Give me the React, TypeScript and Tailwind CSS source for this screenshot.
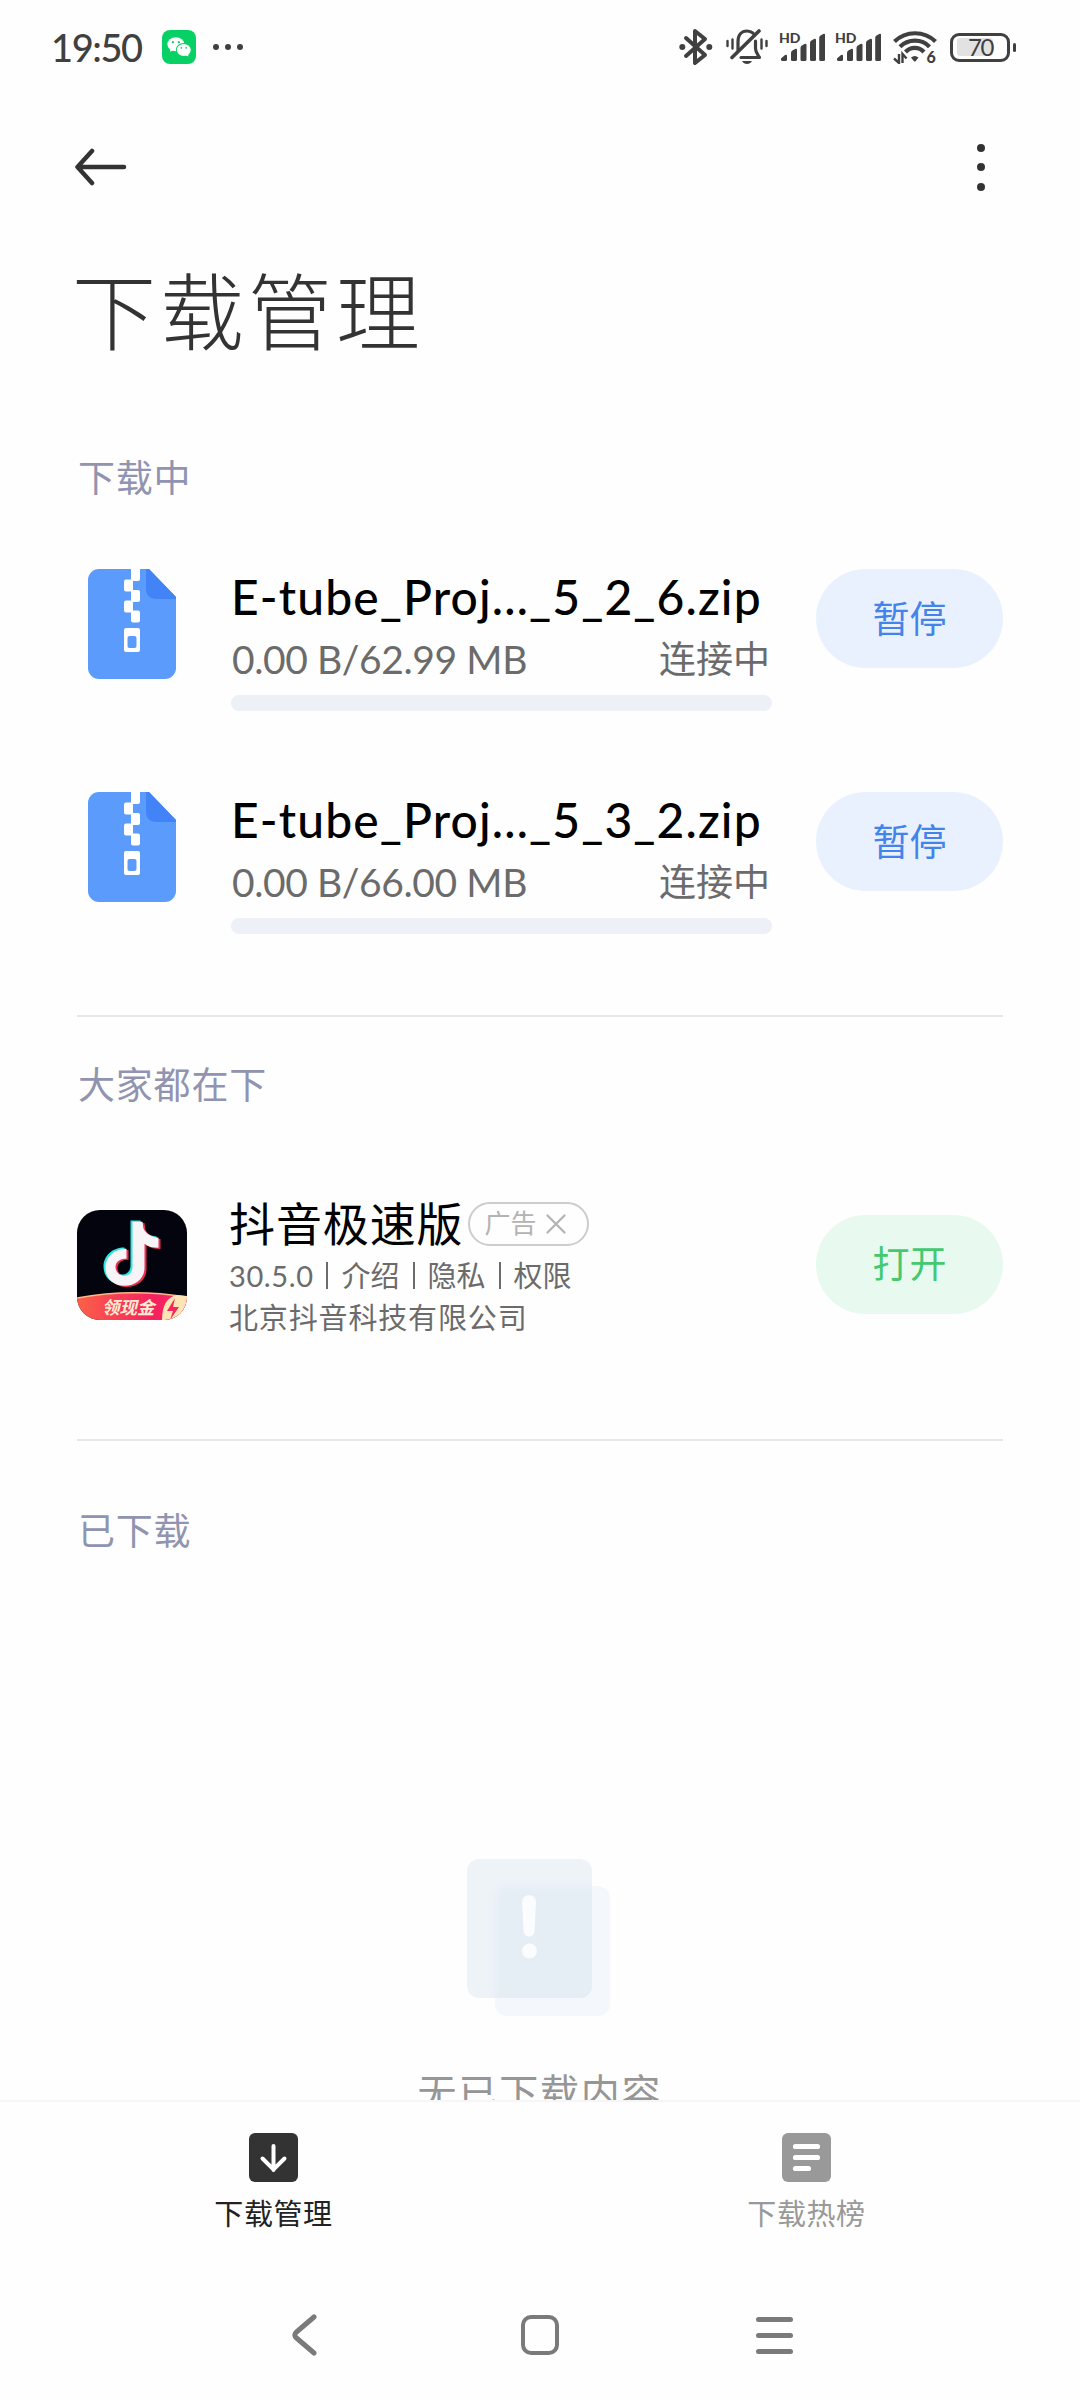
import type { ReactNode } from "react";

const downloads = [
  { name: "E-tube_Proj…_5_2_6.zip", size: "0.00 B/62.99 MB", status: "连接中" },
  { name: "E-tube_Proj…_5_3_2.zip", size: "0.00 B/66.00 MB", status: "连接中" },
];

function WeChatIcon() {
  return (
    <svg className="w-[34px] h-[34px]" viewBox="0 0 34 34">
      <rect width="34" height="34" rx="8" fill="#07d164" />
      <path d="M8.5 18l-.4 3.8 4-2z" fill="#fff" />
      <ellipse cx="13.8" cy="14.3" rx="8.4" ry="7" fill="#fff" />
      <ellipse cx="21.6" cy="19.8" rx="7.8" ry="6.8" fill="#07d164" />
      <ellipse cx="21.8" cy="19.9" rx="7" ry="6" fill="#fff" />
      <path d="M23 25l3.4 1.4-.2-3z" fill="#fff" />
      <g fill="#07d164">
        <circle cx="10.9" cy="12.2" r="1.1" />
        <circle cx="16.8" cy="12.2" r="1.1" />
        <circle cx="19.4" cy="17.8" r="0.9" />
        <circle cx="24.1" cy="17.8" r="0.9" />
      </g>
    </svg>
  );
}

function BluetoothIcon() {
  return (
    <svg className="w-[34px] h-[38px]" viewBox="0 0 34 38">
      <path
        d="M7 10l19 17-10 8V3l10 8L7 28"
        fill="none"
        stroke="#404040"
        strokeWidth="4"
        strokeLinecap="round"
        strokeLinejoin="round"
      />
      <circle cx="3.3" cy="19" r="3" fill="#404040" />
      <circle cx="30.3" cy="19" r="3" fill="#404040" />
    </svg>
  );
}

function MutedBellIcon() {
  return (
    <svg className="w-[42px] h-[36px]" viewBox="0 0 42 36" fill="none" stroke="#404040" strokeLinecap="round">
      <path d="M12 21v-8C12 6 15.500 2 21 2c2.500 0 4.500 .8 6 2.200" strokeWidth="3.200" />
      <path d="M29.500 12v7.500c0 4 2.500 6.500 4 9H15" strokeWidth="3.200" strokeLinejoin="round" />
      <path d="M6 28.500L33 2" strokeWidth="3.600" />
      <path d="M16 32h10c-1 2-3 3-5 3s-4-1-5-3z" fill="#404040" stroke="none" />
      <path d="M1.500 12v5M6.500 10.500v9M35.500 10.500v9M40.500 12v5" strokeWidth="2.400" />
    </svg>
  );
}

function SignalIcon() {
  return (
    <svg className="w-[46px] h-[36px] overflow-visible" viewBox="0 -2 46 36" fill="#404040">
      <text x="0" y="11.500" fontSize="14" fontWeight="900" fontFamily="Lato, sans-serif">
        HD
      </text>
      <path d="M2 27.500l4-3.500q2-.8 2 1v3.500q0 1.500-1.500 1.500H3.500Q2 30 2 28.500z" />
      <path d="M12 22q0-1.500 1-2.200l3-1.800q2-.8 2 1v9.500q0 1.500-1.500 1.500h-3Q12 30 12 28.500z" />
      <path d="M21.500 17q0-1.500 1-2.200l3-1.800q2-.8 2 1v14.500q0 1.500-1.500 1.500h-3q-1.500 0-1.500-1.500z" />
      <path d="M31 12q0-1.500 1-2.200l3-1.800q2-.8 2 1v19.500q0 1.500-1.500 1.500h-3Q31 30 31 28.500z" />
      <path d="M40.200 7q0-1.500 1-2.200l3-1.800q1.800-.8 1.800 1v24.500q0 1.500-1.500 1.500h-2.800q-1.500 0-1.500-1.500z" />
    </svg>
  );
}

function WifiIcon() {
  return (
    <svg className="w-[44px] h-[34px]" viewBox="0 0 44 34">
      <g fill="none" stroke="#404040" strokeWidth="4.200">
        <path d="M1.500 11.500C13 0.500 31 0.500 42.500 11.500" />
        <path d="M7 16.800C15 8.600 29 8.600 36.500 16.800" />
        <path d="M12.500 22c5-5.400 13.500-5.400 18.500 0" />
      </g>
      <path d="M18 27.500q3.700-3.200 7.500 0l-2.700 3.500q-1 1.200-2 0z" fill="#404040" />
      <g fill="none" stroke="#404040" strokeWidth="2.400">
        <path d="M6 24v9L1 28.500M9.500 33v-9l4 4.500" />
      </g>
      <text x="33.500" y="32.500" fontSize="16" fontWeight="900" fill="#404040" fontFamily="Lato, sans-serif">
        6
      </text>
    </svg>
  );
}

function Battery() {
  return (
    <div className="flex items-center gap-[3px]">
      <div className="flex h-[29px] w-[60px] items-center rounded-[9px] border-[3px] border-[#404040] p-[4px]">
        <div className="flex h-[18px] w-[36px] items-center rounded-[3px] bg-[#e2e2e2] pl-[11px] text-[24px] leading-none tracking-[-1.5px] text-[#404040]">
          70
        </div>
      </div>
      <div className="h-[9px] w-[3px] rounded-full bg-[#404040]" />
    </div>
  );
}

function StatusBar() {
  return (
    <div className="flex h-[94px] items-center pl-[51px] pr-[64px]">
      <span className="w-[111px] text-[38px] font-medium leading-none tracking-[-1.4px] text-[#404040]">19:50</span>
      <WeChatIcon />
      <div className="ml-[17px] flex gap-[6px]">
        <i className="h-[6px] w-[6px] rounded-full bg-[#404040]" />
        <i className="h-[6px] w-[6px] rounded-full bg-[#404040]" />
        <i className="h-[6px] w-[6px] rounded-full bg-[#404040]" />
      </div>
      <div className="ml-auto flex items-center">
        <BluetoothIcon />
        <div className="ml-[13px]">
          <MutedBellIcon />
        </div>
        <div className="ml-[11px] flex gap-[10px]">
          <SignalIcon />
          <SignalIcon />
        </div>
        <div className="ml-[12px] mr-[13px]">
          <WifiIcon />
        </div>
        <Battery />
      </div>
    </div>
  );
}

function Header() {
  return (
    <header className="flex h-[146px] items-center justify-between pl-[75px] pr-[95px]">
      <svg className="w-[52px] h-[38px]" viewBox="0 0 52 38" fill="none" stroke="#333" strokeWidth="4.500" strokeLinecap="round" strokeLinejoin="round">
        <path d="M17 3L2.500 19 17 35M3 19h46" />
      </svg>
      <div className="flex flex-col gap-[11.5px]">
        <i className="h-[8px] w-[8px] rounded-full bg-[#333]" />
        <i className="h-[8px] w-[8px] rounded-full bg-[#333]" />
        <i className="h-[8px] w-[8px] rounded-full bg-[#333]" />
      </div>
    </header>
  );
}

function ZipIcon() {
  return (
    <svg className="w-[88px] h-[110px] shrink-0" viewBox="0 0 88 110">
      <path d="M11 0h50l27 28v71a11 11 0 0 1-11 11H11A11 11 0 0 1 0 99V11A11 11 0 0 1 11 0z" fill="#5b9bfb" />
      <path d="M58 0h3l27 28v2H69q-11 0-11-11z" fill="#4383f8" />
      <g fill="#fff">
        <path d="M43 0h9v10q0 2-2 2h-5q-2 0-2-2z" />
        <rect x="36" y="10.500" width="9" height="12" rx="2" />
        <rect x="43" y="21" width="9" height="12" rx="2" />
        <rect x="36" y="31.500" width="9" height="12" rx="2" />
        <rect x="43" y="41.500" width="9" height="12" rx="2" />
        <rect x="36" y="59" width="16" height="24" rx="2" />
      </g>
      <rect x="39.500" y="67" width="9" height="12" rx="2" fill="#5b9bfb" />
    </svg>
  );
}

function SectionTitle({ children }: { children: ReactNode }) {
  return <h2 className="pl-[78px] text-[37px] leading-[40px] tracking-[0.8px] text-[#9194b0]">{children}</h2>;
}

function DownloadItem({ name, size, status }: { name: string; size: string; status: string }) {
  return (
    <div className="flex h-[223px] items-start pl-[88px] pr-[77px]">
      <ZipIcon />
      <div className="ml-[55px] w-[541px]">
        <div className="h-[60px] text-[48px] font-medium leading-[56px] tracking-[1.1px] whitespace-nowrap text-black">{name}</div>
        <div className="flex h-[60px] items-center justify-between pl-[1px] pr-[2px] text-[#6b6b6b]">
          <span className="text-[39px] tracking-[-0.4px]">{size}</span>
          <span className="text-[37px]">{status}</span>
        </div>
        <div className="mt-[6px] h-[16px] rounded-full bg-[#edf0f7]" />
      </div>
      <button className="ml-auto h-[99px] w-[187px] rounded-full bg-[#eaf1fe] text-[37px] text-[#4284ea]">暂停</button>
    </div>
  );
}

function Divider() {
  return <div className="mx-[77px] h-[2px] shrink-0 bg-[#e6e6e6]" />;
}

function DouyinIcon() {
  const note = "M55 11h10l1 7c3 5 7 8 15 9v10c-6 0-10-1-14-4v24c0 11-9 18-20 18S28 68 28 57c0-11 9-19 21-19v10c-6-1-11 3-11 8s4 9 9 9c5 0 8-4 8-9z";
  return (
    <svg className="w-[110px] h-[110px] shrink-0" viewBox="0 0 110 110">
      <defs>
        <clipPath id="tile">
          <rect width="110" height="110" rx="23" />
        </clipPath>
        <linearGradient id="ribbon">
          <stop offset="0" stopColor="#fb6148" />
          <stop offset="0.7" stopColor="#f5215f" />
          <stop offset="1" stopColor="#fa2a64" />
        </linearGradient>
      </defs>
      <g clipPath="url(#tile)">
        <rect width="110" height="110" fill="#04040f" />
        <path d={note} fill="#2ee6e2" transform="translate(-1.500 -.5)" />
        <path d={note} fill="#ee2e54" transform="translate(2.500 2)" />
        <path d={note} fill="#f6f4f6" transform="translate(.5 .8)" />
        <path d="M0 88Q54 78 110 87v23H0z" fill="url(#ribbon)" />
        <path d="M0 88Q54 78 110 87" fill="none" stroke="#fbb98a" strokeWidth="1.500" />
        <path d="M85 110q0-22 15-25l10 1v24z" fill="#fee3b4" />
        <path d="M98 88l-8 13h6l-3 9 9-13h-6z" fill="#f3285c" />
        <text x="25" y="104" fontSize="17.500" fontWeight="700" fontStyle="italic" fill="#ffecd2">
          领现金
        </text>
      </g>
    </svg>
  );
}

function PromotedApp() {
  return (
    <div className="flex h-[150px] items-center pl-[77px] pr-[77px]">
      <DouyinIcon />
      <div className="ml-[42px]">
        <div className="flex h-[62px] items-center">
          <span className="text-[46px] tracking-[0.9px] text-black">抖音极速版</span>
          <div className="ml-[4px] flex h-[44px] w-[121px] items-center rounded-full border-2 border-[#ccc] pl-[15px] text-[26px] text-[#b3b3b3]">
            广告
            <svg className="ml-[9px] w-[20px] h-[20px]" viewBox="0 0 20 20" stroke="#b3b3b3" strokeWidth="2.200" strokeLinecap="round">
              <path d="M1.500 1.500l17 17M18.500 1.500l-17 17" />
            </svg>
          </div>
        </div>
        <div className="flex h-[42px] items-center text-[29px] text-[#6b6b6b]">
          <span className="tracking-[0.6px]">30.5.0</span>
          <i className="ml-[12px] mr-[14px] h-[27px] w-[2px] bg-[#6b6b6b]" />
          介绍
          <i className="mx-[13px] h-[27px] w-[2px] bg-[#6b6b6b]" />
          隐私
          <i className="mx-[13px] h-[27px] w-[2px] bg-[#6b6b6b]" />
          权限
        </div>
        <div className="text-[29px] leading-[41px] tracking-[0.85px] text-[#6b6b6b]">北京抖音科技有限公司</div>
      </div>
      <button className="mb-[2px] ml-auto h-[99px] w-[187px] rounded-full bg-[#e8faef] text-[37px] text-[#44c96e]">打开</button>
    </div>
  );
}

function EmptyState() {
  return (
    <div className="flex flex-col items-center">
      <svg className="w-[146px] h-[160px]" viewBox="0 0 146 160">
        <defs>
          <clipPath id="sheet">
            <rect width="125" height="139" rx="12" />
          </clipPath>
          <filter id="soften" x="-20%" y="-20%" width="140%" height="140%">
            <feGaussianBlur stdDeviation="4" />
          </filter>
        </defs>
        <rect x="28" y="27" width="115" height="130" rx="12" fill="#f4f8fc" />
        <rect width="125" height="139" rx="12" fill="#eef3f8" />
        <g clipPath="url(#sheet)">
          <rect x="29" y="27" width="115" height="130" rx="12" fill="#e5edf5" filter="url(#soften)" />
        </g>
        <path d="M55 43a7 7 0 0 1 14 0l-1.500 29a5.500 5.500 0 0 1-11 0z" fill="#fafcfe" />
        <circle cx="62.500" cy="92" r="7.500" fill="#fafcfe" />
      </svg>
      <p className="mt-[44px] text-[39px] leading-[58px] tracking-[1.8px] text-[#969696]">无已下载内容</p>
    </div>
  );
}

function TabBar() {
  return (
    <nav className="flex h-[162px] shrink-0 border-t-2 border-[#f6f6f6] px-[7px] pt-[31px] text-[29px] leading-[40px] tracking-[0.6px]">
      <div className="flex flex-1 flex-col items-center gap-[12px] text-[#222]">
        <svg className="w-[49px] h-[49px]" viewBox="0 0 49 49">
          <rect width="49" height="49" rx="6" fill="#333" />
          <path d="M24.500 13v24M13.500 25.500l11 11 11-11" fill="none" stroke="#fff" strokeWidth="4" strokeLinecap="round" />
        </svg>
        下载管理
      </div>
      <div className="flex flex-1 flex-col items-center gap-[12px] text-[#999]">
        <svg className="w-[49px] h-[49px]" viewBox="0 0 49 49">
          <rect width="49" height="49" rx="6" fill="#999" />
          <path d="M13.500 13.500h22M13.500 24.500h22M13.500 35.500h13" stroke="#fff" strokeWidth="5.200" strokeLinecap="round" />
        </svg>
        下载热榜
      </div>
    </nav>
  );
}

function SystemNav() {
  return (
    <div className="flex h-[138px] shrink-0 items-center justify-between pt-[8px] pl-[291px] pr-[287px]">
      <svg className="w-[27px] h-[42px]" viewBox="0 0 27 42" fill="none" stroke="#7a7a7a" strokeWidth="5" strokeLinecap="round">
        <path d="M23 3L5.500 18q-3.500 3 0 6L23 39" />
      </svg>
      <div className="ml-[6px] h-[40px] w-[38px] rounded-[10px] border-[4.5px] border-[#7a7a7a]" />
      <div className="flex flex-col gap-[11px]">
        <i className="h-[5px] w-[37px] rounded-full bg-[#7a7a7a]" />
        <i className="h-[5px] w-[37px] rounded-full bg-[#7a7a7a]" />
        <i className="h-[5px] w-[37px] rounded-full bg-[#7a7a7a]" />
      </div>
    </div>
  );
}

export default function App() {
  return (
    <div className="flex h-[2400px] w-[1080px] flex-col overflow-hidden bg-[#fefefe] font-[Lato,'Noto_Sans_CJK_SC',sans-serif]">
      <StatusBar />
      <Header />
      <main className="flex min-h-0 flex-1 flex-col overflow-hidden">
        <h1 className="pl-[72px] text-[84px] font-light leading-[144px] tracking-[4px] text-[#333]">下载管理</h1>
        <div className="pt-[74px]">
          <SectionTitle>下载中</SectionTitle>
        </div>
        <div className="pt-[71px]">
          {downloads.map((item) => (
            <DownloadItem key={item.name} {...item} />
          ))}
        </div>
        <Divider />
        <div className="pt-[48px]">
          <SectionTitle>大家都在下</SectionTitle>
        </div>
        <div className="pt-[85px] pb-[99px]">
          <PromotedApp />
        </div>
        <Divider />
        <div className="pt-[70px] pb-[308px]">
          <SectionTitle>已下载</SectionTitle>
        </div>
        <EmptyState />
      </main>
      <TabBar />
      <SystemNav />
    </div>
  );
}
